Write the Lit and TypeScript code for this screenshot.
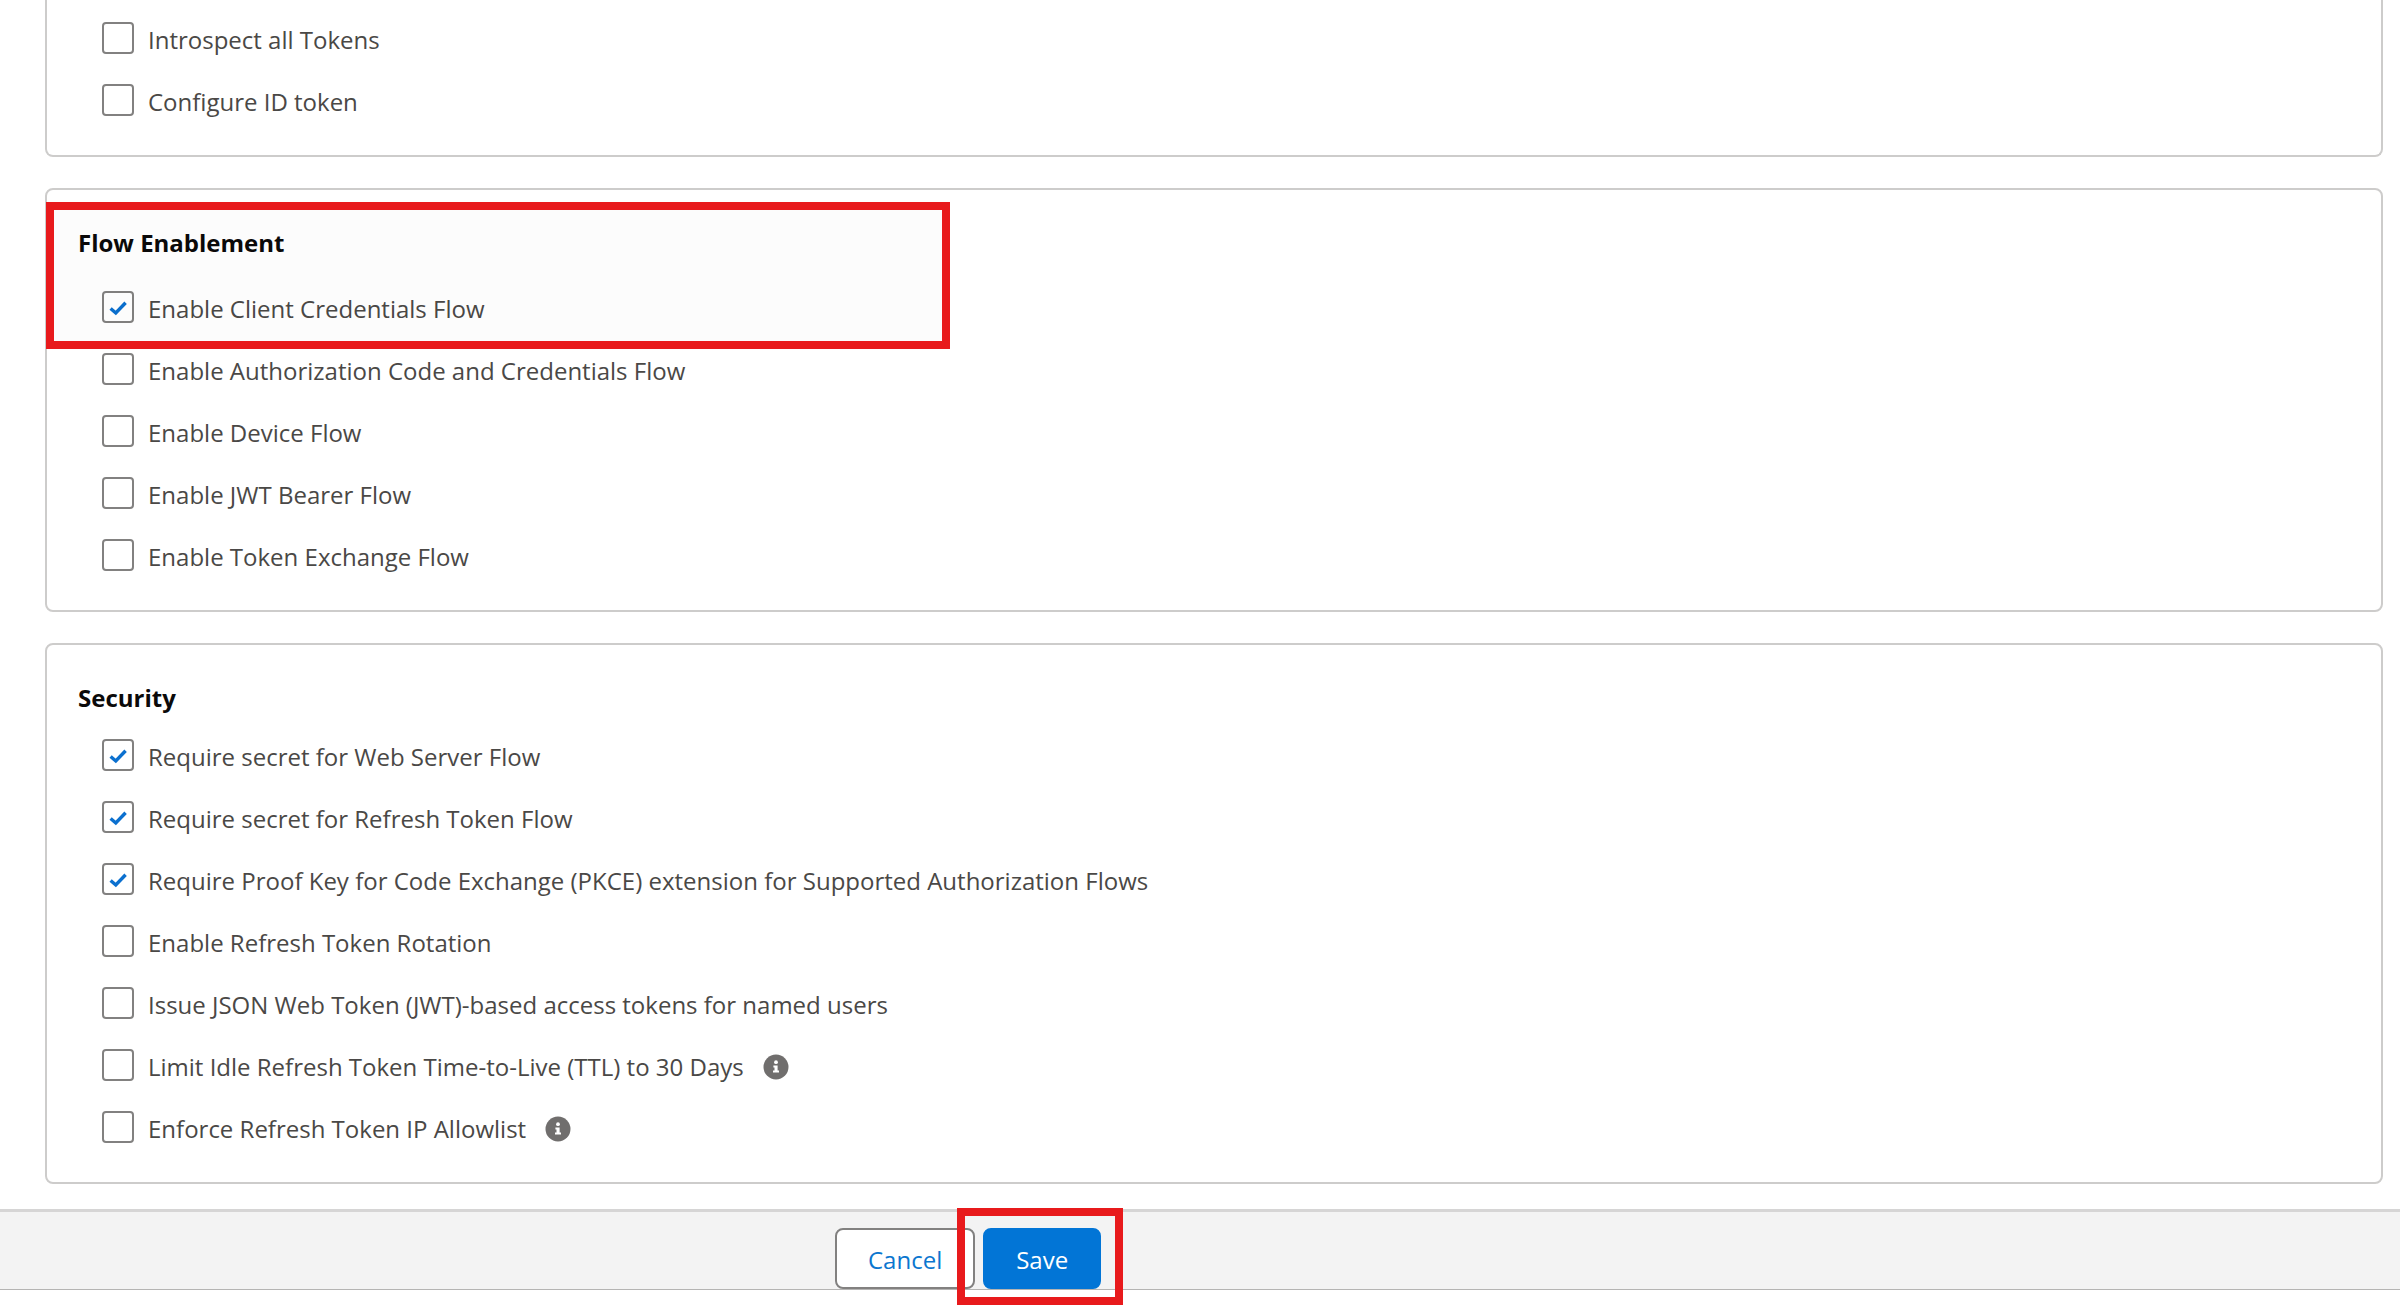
import { LitElement, html, css, nothing } from "lit";
import { customElement, property } from "lit/decorators.js";

interface Option {
  id: string;
  label: string;
  checked?: boolean;
  info?: string;
}

const TOKEN_OPTIONS: Option[] = [
  { id: "introspect", label: "Introspect all Tokens" },
  { id: "id-token", label: "Configure ID token" },
];

const FLOW_OPTIONS: Option[] = [
  { id: "client-credentials", label: "Enable Client Credentials Flow", checked: true },
  { id: "auth-code", label: "Enable Authorization Code and Credentials Flow" },
  { id: "device", label: "Enable Device Flow" },
  { id: "jwt-bearer", label: "Enable JWT Bearer Flow" },
  { id: "token-exchange", label: "Enable Token Exchange Flow" },
];

const SECURITY_OPTIONS: Option[] = [
  { id: "secret-web", label: "Require secret for Web Server Flow", checked: true },
  { id: "secret-refresh", label: "Require secret for Refresh Token Flow", checked: true },
  {
    id: "pkce",
    label: "Require Proof Key for Code Exchange (PKCE) extension for Supported Authorization Flows",
    checked: true,
  },
  { id: "rotation", label: "Enable Refresh Token Rotation" },
  { id: "jwt-access", label: "Issue JSON Web Token (JWT)-based access tokens for named users" },
  { id: "idle-ttl", label: "Limit Idle Refresh Token Time-to-Live (TTL) to 30 Days", info: "Help" },
  { id: "ip-allowlist", label: "Enforce Refresh Token IP Allowlist", info: "Help" },
];

@customElement("option-list")
export class OptionList extends LitElement {
  @property({ attribute: false }) options: Option[] = [];

  static styles = css`
    :host {
      display: block;
    }
    .list {
      display: flex;
      flex-direction: column;
      gap: 30px;
      margin: 0;
      padding: 0 0 0 24px;
      list-style: none;
    }
    .row {
      display: flex;
      height: 32px;
    }
    .box {
      display: grid;
      width: 32px;
      height: 32px;
      margin-right: 14px;
    }
    .input {
      grid-area: 1 / 1;
      appearance: none;
      box-sizing: border-box;
      width: 32px;
      height: 32px;
      margin: 0;
      border: 2px solid #828180;
      border-radius: 4px;
      background: #fff;
    }
    .tick {
      grid-area: 1 / 1;
      visibility: hidden;
      pointer-events: none;
    }
    .input:checked + .tick {
      visibility: visible;
    }
    .label {
      padding-top: 2px;
      line-height: 32px;
      color: #4a4846;
    }
    .info {
      align-self: flex-start;
      display: block;
      width: 26px;
      height: 26px;
      margin: 5px 0 0 19px;
      padding: 0;
      border: 0;
      background: none;
    }
    .glyph {
      display: block;
    }
  `;

  render() {
    return html`<ul class="list">
      ${this.options.map(
        (o) => html`<li class="row">
          <span class="box">
            <input class="input" type="checkbox" id=${o.id} ?checked=${o.checked ?? false} />
            <svg class="tick" width="32" height="32" viewBox="0 0 32 32" aria-hidden="true">
              <path d="M8.6 17.4 L13.8 22 L23.6 11.8" fill="none" stroke="#0b70cf" stroke-width="3.4" />
            </svg>
          </span>
          <label class="label" for=${o.id}>${o.label}</label>
          ${o.info
            ? html`<button class="info" type="button" aria-label=${o.info}>
                <svg class="glyph" width="26" height="26" viewBox="0 0 26 26" aria-hidden="true">
                  <circle cx="13" cy="13" r="12.5" fill="#706e6d" />
                  <circle cx="13" cy="8.2" r="1.9" fill="#fff" />
                  <path d="M10.4 11.4h4.2v5.2h1.4v2h-6v-2h1.5v-3.2h-1.1z" fill="#fff" />
                </svg>
              </button>`
            : nothing}
        </li>`
      )}
    </ul>`;
  }
}

@customElement("app-root")
export class AppRoot extends LitElement {
  static styles = css`
    :host {
      display: block;
      min-height: 100vh;
      background: #fff;
      font-family: "Open Sans", "Noto Sans", sans-serif;
      font-size: 24px;
    }
    .form {
      display: flex;
      flex-direction: column;
      gap: 31px;
      padding: 0 17px 25px 45px;
    }
    .card {
      position: relative;
      padding: 35px 31px 39px;
      border: 2px solid #cdcccb;
      border-radius: 8px;
    }
    .card.continued {
      padding-top: 22px;
      border-top: 0;
      border-top-left-radius: 0;
      border-top-right-radius: 0;
    }
    .title {
      margin: 0 0 23px;
      font-size: 24px;
      font-weight: 700;
      line-height: 36px;
      color: #0b0a0a;
    }
    .title.roomy {
      margin-bottom: 30px;
    }
    .highlight {
      position: absolute;
      box-sizing: border-box;
      border: 8px solid #e81a1c;
      pointer-events: none;
    }
    .highlight.flow {
      top: 12px;
      left: -1px;
      width: 904px;
      height: 147px;
      background: rgba(0, 0, 0, 0.01);
    }
    .highlight.save {
      inset: -20px -22px -16px -26px;
    }
    .footer {
      display: flex;
      gap: 8px;
      padding: 16px 0 0 calc(50% - 365px);
      border-top: 3px solid #d6d5d5;
      border-bottom: 1px solid #b5b4b3;
      background: #f3f3f3;
    }
    .action {
      position: relative;
    }
    .button {
      display: block;
      box-sizing: border-box;
      height: 61px;
      padding: 2px 31px 0;
      border: 2px solid #828180;
      border-radius: 8px;
      background: #fff;
      color: #0b76cf;
      font: inherit;
    }
    .button.primary {
      border-color: #0275d6;
      background: #0275d6;
      color: #fff;
    }
  `;

  render() {
    return html`
      <form class="form" id="settings">
        <section class="card continued">
          <option-list .options=${TOKEN_OPTIONS}></option-list>
        </section>
        <section class="card">
          <h2 class="title roomy">Flow Enablement</h2>
          <option-list .options=${FLOW_OPTIONS}></option-list>
          <div class="highlight flow"></div>
        </section>
        <section class="card">
          <h2 class="title">Security</h2>
          <option-list .options=${SECURITY_OPTIONS}></option-list>
        </section>
      </form>
      <footer class="footer">
        <div class="action"><button class="button" type="button">Cancel</button></div>
        <div class="action">
          <button class="button primary" type="button">Save</button>
          <div class="highlight save"></div>
        </div>
      </footer>
    `;
  }
}
